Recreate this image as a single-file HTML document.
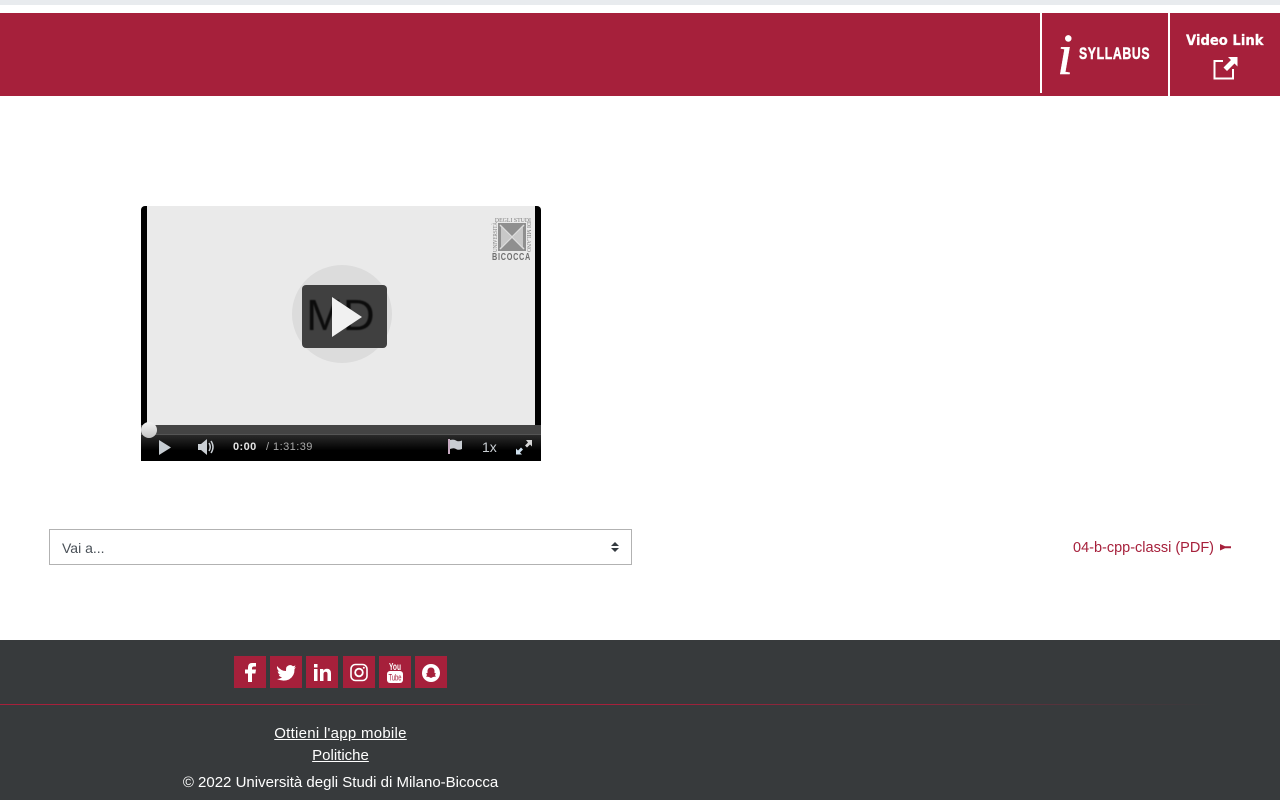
<!DOCTYPE html>
<html lang="it"><head><meta charset="utf-8"><title>Video</title>
<style>
html,body{margin:0;padding:0;width:1280px;height:800px;overflow:hidden;background:#fff;font-family:"Liberation Sans",sans-serif}
.a{position:absolute}
a{color:inherit}
.s{position:absolute;top:656px;width:32px;height:32px;background:#a6203b}
.s svg{position:absolute;left:0;top:0;width:32px;height:32px}
</style></head><body>
<div class="a" style="left:0;top:0;width:1280px;height:5px;background:#e8ebee"></div>
<div class="a" style="left:0;top:13px;width:1280px;height:83px;background:#a6203b"></div>
<div class="a" style="left:1040px;top:13px;width:2px;height:80px;background:#fff"></div>
<div class="a" style="left:1168px;top:13px;width:2px;height:83px;background:#fff"></div>
<div class="a" style="left:1057px;top:26px;font:italic 58px/58px 'Liberation Serif',serif;color:#fff;-webkit-text-stroke:.4px #fff">i</div>
<div class="a" style="left:1079px;top:45px;font:bold 17px/17px 'Liberation Sans',sans-serif;color:#fff;transform:scaleX(.72);transform-origin:0 0;letter-spacing:.9px;-webkit-text-stroke:.5px #fff;white-space:nowrap">SYLLABUS</div>
<div class="a" style="left:1186px;top:33px;font:bold 14px/17px 'DejaVu Sans',sans-serif;color:#fff;transform:scaleX(.94);transform-origin:0 0;white-space:nowrap;-webkit-text-stroke:.25px #fff">Video Link</div>
<svg class="a" style="left:1212px;top:56px" width="26" height="24" viewBox="0 0 26 24"><path d="M11 5H2.500V22.500H21V13" fill="none" stroke="#fff" stroke-width="2"/><path d="M16 1H25.500V10.500L22.500 7.500L15 15L11.500 11.500L19 4Z" fill="#fff"/></svg>

<div class="a" style="left:141px;top:206px;width:400px;height:255px;background:#000;border-radius:4px 4px 0 0;overflow:hidden">
  <div class="a" style="left:6px;top:0;width:388px;height:220px;background:#eaeaea"></div>
  <div class="a" style="left:151px;top:59px;width:100px;height:98px;border-radius:50%;background:#dcdcdc"></div>
  <div class="a" style="left:161px;top:79px;width:85px;height:63px;border-radius:4px;background:#404040"></div>
  <div class="a" style="left:157px;top:87px;width:85px;text-align:center;font:44px/46px 'Liberation Sans',sans-serif;color:#0c0c0c;letter-spacing:0;filter:blur(.4px)">MD</div>
  <svg class="a" style="left:191px;top:91px" width="30" height="40" viewBox="0 0 30 40"><path d="M0 0L30 20L0 40Z" fill="#f1f1f1"/></svg>
  <svg class="a" style="left:350px;top:10px" width="42" height="46" viewBox="0 0 42 46">
    <text x="1" y="6" font-family="Liberation Serif,serif" font-size="6" fill="#7d7d7d" textLength="39" lengthAdjust="spacingAndGlyphs">&#160; DEGLI STUDI</text>
    <text transform="translate(6,36) rotate(-90)" font-family="Liberation Serif,serif" font-size="6" fill="#7d7d7d" textLength="30" lengthAdjust="spacingAndGlyphs">UNIVERSITÀ</text>
    <text transform="translate(36,6) rotate(90)" font-family="Liberation Serif,serif" font-size="6" fill="#7d7d7d" textLength="30" lengthAdjust="spacingAndGlyphs">DI MILANO</text>
    <rect x="7" y="7" width="28" height="28" fill="#8f8f8f"/>
    <path d="M10 11L20 21L10 31ZM32 11L22 21L32 31Z" fill="#c8c8c8"/>
    <path d="M9 9L33 33M33 9L9 33" stroke="#dcdcdc" stroke-width="1.500"/>
    <text x="1" y="44" font-family="Liberation Sans,sans-serif" font-weight="bold" font-size="10" fill="#6f6f6f" textLength="39" lengthAdjust="spacingAndGlyphs" letter-spacing="1">BICOCCA</text>
  </svg>
  <div class="a" style="left:0;top:219px;width:400px;height:9px;background:#444"></div>
  <div class="a" style="left:0;top:228px;width:400px;height:27px;background:linear-gradient(#2a2a2a,#000 60%);border-top:1px solid #555;box-sizing:border-box"></div>
  <div class="a" style="left:0;top:216px;width:16px;height:16px;border-radius:50%;background:linear-gradient(#f2f2f2,#c4c4c4)"></div>
  <svg class="a" style="left:18px;top:234px" width="12" height="15" viewBox="0 0 12 15"><path d="M0 0L12 7.500L0 15Z" fill="#c6ccd2"/></svg>
  <svg class="a" style="left:56px;top:232px" width="18" height="18" viewBox="0 0 18 18"><path d="M1 6H4L10 1V17L4 12H1Z" fill="#c9ced3"/><path d="M12 5Q14.500 9 12 13M14 3Q18 9 14 15" fill="none" stroke="#c9ced3" stroke-width="1.500"/></svg>
  <div class="a" style="left:92px;top:235px;font:bold 11px/13px 'Liberation Sans',sans-serif;color:#e4e4e4;letter-spacing:.4px">0:00</div>
  <div class="a" style="left:125px;top:235px;font:11px/13px 'Liberation Sans',sans-serif;color:#aaa;letter-spacing:.45px;white-space:nowrap">/ 1:31:39</div>
  <svg class="a" style="left:306px;top:233px" width="16" height="15" viewBox="0 0 16 15"><path d="M1 0H3V15H1Z" fill="#c6a9c0"/><path d="M3 1Q7 0 9 1.500T15 1.500V10Q11 11.500 9 10T3 10Z" fill="#c9ced3"/></svg>
  <div class="a" style="left:341px;top:233px;font:14px/16px 'Liberation Sans',sans-serif;color:#c9ced3">1x</div>
  <svg class="a" style="left:375px;top:234px" width="16" height="15" viewBox="0 0 16 15"><path d="M10 0H16V6.500L14 4.500L11 7.500L9 5.500L12 2.500Z" fill="#d6d6d6"/><path d="M0 8.500L2 10.500L5 7.500L7 9.500L4 12.500L6 14.500H0Z" fill="#cfe0ee"/></svg>
</div>

<div class="a" style="left:49px;top:529px;width:583px;height:36px;box-sizing:border-box;border:1px solid #b2b2b2;background:#fff"></div>
<div class="a" style="left:62px;top:539px;font:14px/18px 'Liberation Sans',sans-serif;color:#495057">Vai a...</div>
<svg class="a" style="left:610px;top:542px" width="10" height="11" viewBox="0 0 10 11"><path d="M5 0L9 4H1ZM1 6H9L5 10Z" fill="#343a40"/></svg>

<div class="a" style="left:1073px;top:539px;font:14.500px/18px 'Liberation Sans',sans-serif;color:#a6203b;white-space:nowrap">04-b-cpp-classi (PDF)</div>
<svg class="a" style="left:1220px;top:544px" width="11" height="7" viewBox="0 0 11 7"><path d="M0 0L5 2.200H11V4.300H5L0 6.500Z" fill="#a6203b"/></svg>

<div class="a" style="left:0;top:640px;width:1280px;height:160px;background:#373a3c"></div>
<div class="a" style="left:0;top:704px;width:1280px;height:1px;background:linear-gradient(90deg,#a6203b,#a6203b 50%,#373a3c 95%)"></div>

<div class="s" style="left:234px"><svg viewBox="0 0 32 32"><path d="M14 26V17.500H11V13.500H14V11.500Q14 7 18 7H22V10.500H20Q18 10.500 18 12.300V13.500H22L21.400 17.500H18V26Z" fill="#fff"/></svg></div>
<div class="s" style="left:270px"><svg viewBox="0 0 32 32"><path d="M7 10Q11 15 16 15Q15.500 9.500 20 9Q22 9 23 10.300L25.500 9.500L24.200 11.700L26 11.300L24.500 13Q24.800 20 19 23.500Q13 26 7 23Q10 23 12 21.300Q9.500 21 8.700 18.800H10.500Q8 18 7.700 15.300L9.500 15.800Q6.500 13.500 7 10Z" fill="#fff"/></svg></div>
<div class="s" style="left:306px"><svg viewBox="0 0 32 32"><path d="M8 13H11.500V25H8ZM8 8H11.500V11.500H8ZM14 13H17.300V14.700Q18.500 12.700 21 12.700Q25 12.700 25 17.500V25H21.500V18Q21.500 15.700 19.700 15.700Q17.500 15.700 17.500 18V25H14Z" fill="#fff"/></svg></div>
<div class="s" style="left:343px"><svg viewBox="0 0 32 32"><rect x="8" y="8.500" width="16" height="16" rx="4.500" fill="none" stroke="#fff" stroke-width="1.600"/><circle cx="16" cy="16.500" r="3.800" fill="none" stroke="#fff" stroke-width="1.800"/><circle cx="20.800" cy="11.700" r="1" fill="#fff"/></svg></div>
<div class="s" style="left:379px"><svg viewBox="0 0 32 32"><text x="16" y="14" text-anchor="middle" font-family="Liberation Sans,sans-serif" font-size="10" fill="#fff" font-weight="bold" textLength="12" lengthAdjust="spacingAndGlyphs">You</text><rect x="8" y="15" width="16" height="12" rx="3" fill="#fff"/><text x="16" y="24.500" text-anchor="middle" font-family="Liberation Sans,sans-serif" font-size="9" fill="#a6203b" textLength="13" lengthAdjust="spacingAndGlyphs">Tube</text></svg></div>
<div class="s" style="left:415px"><svg viewBox="0 0 32 32"><circle cx="16" cy="17" r="9" fill="#fff"/><path d="M16 11.500Q19.500 11.500 19.500 15.500V17L21 17.500L19.800 19L21 20.500L18 21L16 22L14 21L11 20.500L12.200 19L11 17.500L12.500 17V15.500Q12.500 11.500 16 11.500Z" fill="#a6203b"/></svg></div>

<div class="a" style="left:170px;top:723px;width:341px;text-align:center;font:15px/22px 'Liberation Sans',sans-serif;color:#fff;letter-spacing:.27px"><a href="#">Ottieni l'app mobile</a></div>
<div class="a" style="left:170px;top:745px;width:341px;text-align:center;font:15px/22px 'Liberation Sans',sans-serif;color:#fff"><a href="#">Politiche</a></div>
<div class="a" style="left:170px;top:772px;width:341px;text-align:center;font:15px/22px 'Liberation Sans',sans-serif;color:#fff;white-space:nowrap">© 2022 Università degli Studi di Milano-Bicocca</div>
</body></html>
